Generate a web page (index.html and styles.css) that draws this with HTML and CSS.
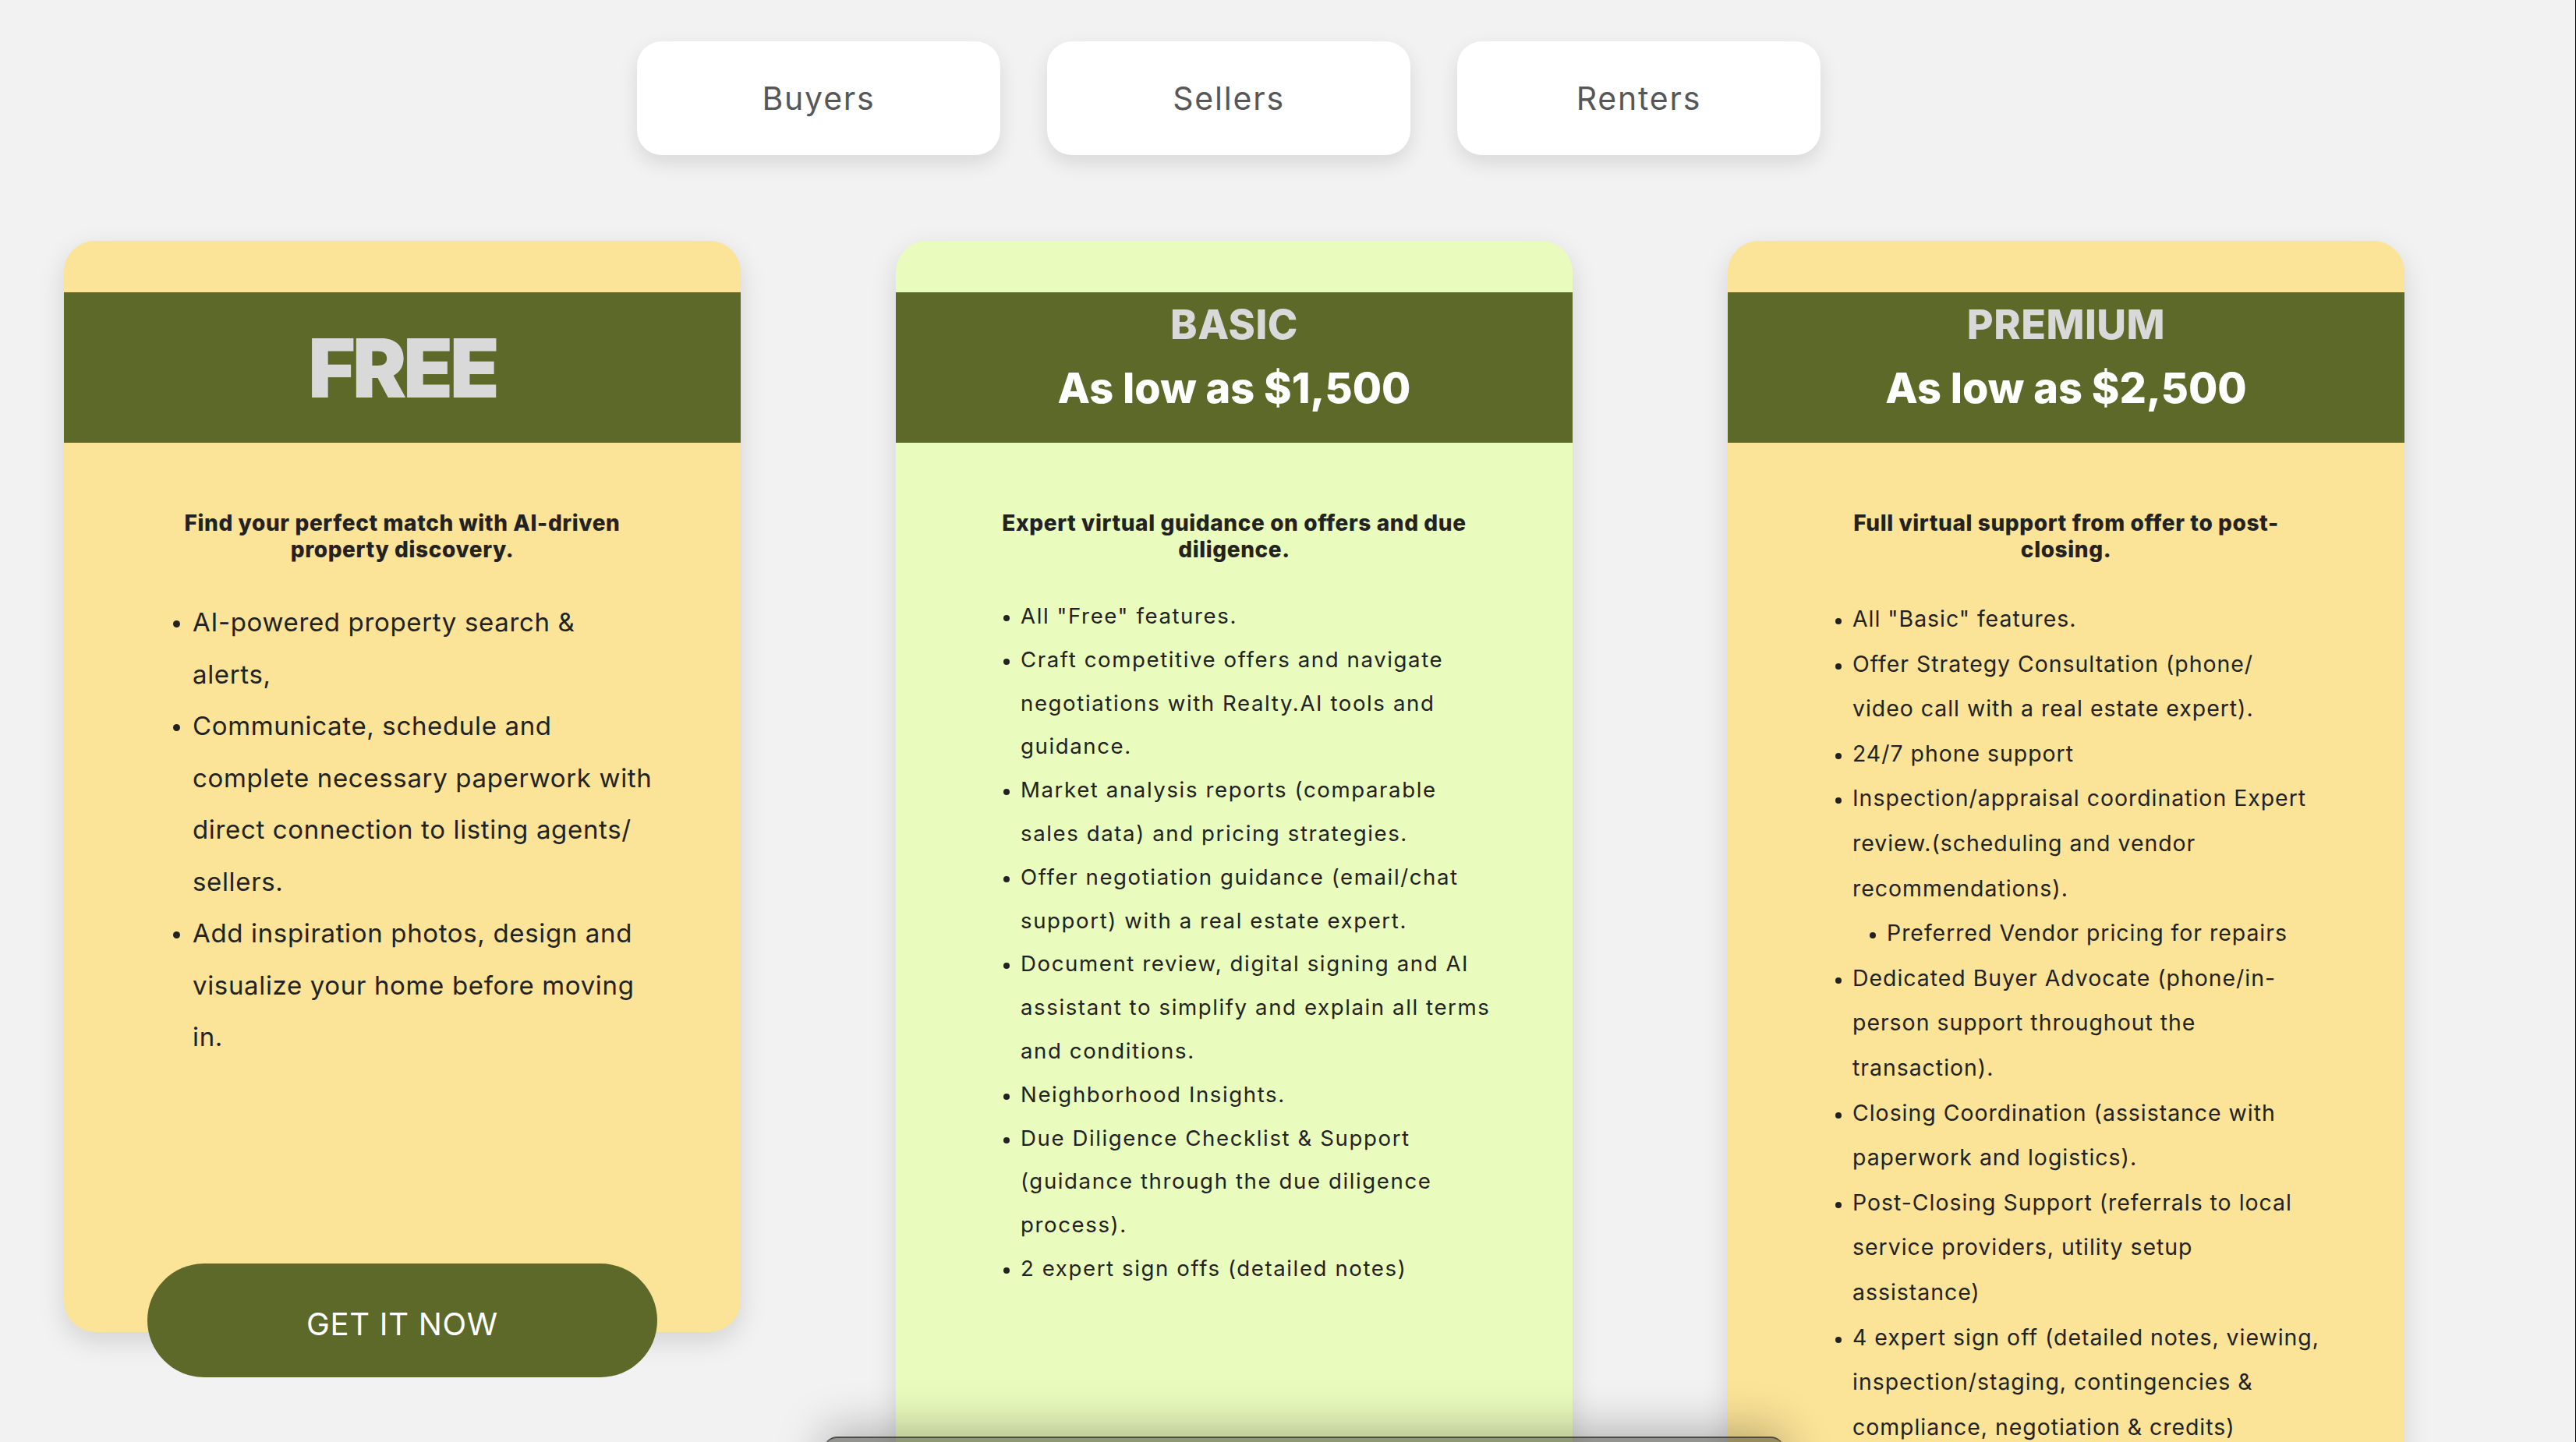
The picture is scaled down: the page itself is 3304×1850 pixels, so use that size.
FILE: index.html
```html
<!DOCTYPE html>
<html lang="en">
<head>
<meta charset="utf-8">
<title>Realty.AI Plans</title>
<link rel="stylesheet" href="styles.css">
</head>
<body>
<main class="wrap">
  <nav class="tabs">
    <button class="tab">Buyers</button>
    <button class="tab">Sellers</button>
    <button class="tab">Renters</button>
  </nav>

  <div class="cards">
    <section class="card card--yellow card--free">
      <header class="band band--single">
        <h2 class="plan-big">FREE</h2>
      </header>
      <p class="lead">Find your perfect match with AI-driven<br>property discovery.</p>
      <ul class="features features--lg">
        <li>AI-powered property search &amp;<br>alerts,</li>
        <li>Communicate, schedule and<br>complete necessary paperwork with<br>direct connection to listing agents/<br>sellers.</li>
        <li>Add inspiration photos, design and<br>visualize your home before moving<br>in.</li>
      </ul>
      <a class="cta" href="#">GET IT NOW</a>
    </section>

    <section class="card card--green card--basic">
      <header class="band">
        <h2 class="plan">BASIC</h2>
        <p class="price">As low as $1,500</p>
      </header>
      <p class="lead">Expert virtual guidance on offers and due<br>diligence.</p>
      <ul class="features features--sm">
        <li>All "Free" features.</li>
        <li>Craft competitive offers and navigate<br>negotiations with Realty.AI tools and<br>guidance.</li>
        <li>Market analysis reports (comparable<br>sales data) and pricing strategies.</li>
        <li>Offer negotiation guidance (email/chat<br>support) with a real estate expert.</li>
        <li>Document review, digital signing and AI<br>assistant to simplify and explain all terms<br>and conditions.</li>
        <li>Neighborhood Insights.</li>
        <li>Due Diligence Checklist &amp; Support<br>(guidance through the due diligence<br>process).</li>
        <li>2 expert sign offs (detailed notes)</li>
      </ul>
    </section>

    <section class="card card--yellow card--premium">
      <header class="band">
        <h2 class="plan">PREMIUM</h2>
        <p class="price">As low as $2,500</p>
      </header>
      <p class="lead">Full virtual support from offer to post-<br>closing.</p>
      <ul class="features features--md">
        <li>All "Basic" features.</li>
        <li>Offer Strategy Consultation (phone/<br>video call with a real estate expert).</li>
        <li>24/7 phone support</li>
        <li>Inspection/appraisal coordination Expert<br>review.(scheduling and vendor<br>recommendations).
          <ul class="sub">
            <li>Preferred Vendor pricing for repairs</li>
          </ul>
        </li>
        <li>Dedicated Buyer Advocate (phone/in-<br>person support throughout the<br>transaction).</li>
        <li>Closing Coordination (assistance with<br>paperwork and logistics).</li>
        <li>Post-Closing Support (referrals to local<br>service providers, utility setup<br>assistance)</li>
        <li>4 expert sign off (detailed notes, viewing,<br>inspection/staging, contingencies &amp;<br>compliance, negotiation &amp; credits)</li>
      </ul>
    </section>
  </div>
</main>
<div class="dock" aria-hidden="true"></div>
</body>
</html>
```

FILE: styles.css
```css
html, body {
  margin: 0;
  padding: 0;
  overflow: hidden;
}

body {
  background: #f2f2f2;
  font-family: "Inter", "Liberation Sans", sans-serif;
  color: #222222;
  height: 1850px;
}

body::after {
  content: "";
  position: fixed;
  top: 0;
  right: 0;
  bottom: 0;
  width: 1px;
  background: #000;
}

.wrap {
  width: 3002px;
  margin-left: 82px;
  padding-top: 53px;
}

/* ---------- tabs ---------- */
.tabs {
  display: flex;
  justify-content: center;
  gap: 60px;
  padding-right: 14px;
}

.tab {
  width: 466px;
  height: 146px;
  border: none;
  border-radius: 32px;
  background: #ffffff;
  box-shadow: 0 10px 26px rgba(0, 0, 0, 0.11);
  font-family: "Inter", "Liberation Sans", sans-serif;
  font-size: 41px;
  font-weight: 400;
  letter-spacing: 1.8px;
  color: #575757;
  padding: 0;
}

/* ---------- cards ---------- */
.cards {
  display: flex;
  align-items: flex-start;
  gap: 199px;
  margin-top: 110px;
}

.card {
  width: 868px;
  flex: 0 0 868px;
  border-radius: 40px;
  padding-top: 66px;
  box-sizing: border-box;
  display: flex;
  flex-direction: column;
  box-shadow: 0 12px 34px rgba(0, 0, 0, 0.13);
}

.card--yellow { background: #fbe397; }
.card--green { background: #e9fbbd; }

.card--free { height: 1400px; }
.card--basic { min-height: 1900px; }
.card--premium { min-height: 1900px; }

.band {
  height: 193px;
  box-sizing: border-box;
  background: #5d6929;
  display: flex;
  flex-direction: column;
  align-items: center;
  padding-top: 16px;
}

.band--single {
  justify-content: center;
  padding-top: 0;
}

.plan-big {
  margin: 0;
  font-size: 104px;
  line-height: 104px;
  font-weight: 900;
  letter-spacing: -4px;
  color: #d9d9d9;
}

.plan {
  margin: 0;
  font-size: 52px;
  line-height: 52px;
  font-weight: 800;
  letter-spacing: 0.5px;
  color: #d9d9d9;
}

.price {
  margin: 28px 0 0;
  font-size: 54px;
  line-height: 54px;
  font-weight: 800;
  color: #ffffff;
}

.lead {
  margin: 86px 0 0;
  text-align: center;
  font-size: 28px;
  line-height: 34px;
  font-weight: 800;
  letter-spacing: 0.6px;
  color: #222222;
}

.features {
  margin: 43px 0 0;
  padding: 0 30px 0 160px;
  color: #222222;
  list-style: disc;
}

.features--lg {
  padding-left: 165px;
  font-size: 33px;
  line-height: 66.5px;
  letter-spacing: 0.65px;
}

.features--sm {
  margin-top: 41px;
  font-size: 27.6px;
  line-height: 55.8px;
  letter-spacing: 1.6px;
}

.features--md {
  font-size: 28.4px;
  line-height: 57.6px;
  letter-spacing: 1px;
}

.features li::marker {
  font-size: 0.85em;
}

.sub {
  margin: 0;
  padding-left: 44px;
  list-style: disc;
}

.cta {
  margin-top: auto;
  margin-bottom: -58px;
  align-self: center;
  width: 654px;
  height: 146px;
  border-radius: 73px;
  background: #5d6929;
  color: #ffffff;
  text-decoration: none;
  font-size: 40px;
  letter-spacing: 0.7px;
  display: flex;
  align-items: center;
  justify-content: center;
  padding-top: 8px;
  box-sizing: border-box;
}

/* ---------- bottom dock overlay ---------- */
.dock {
  position: fixed;
  left: 1056px;
  top: 1843px;
  width: 1233px;
  height: 80px;
  border-radius: 18px 18px 0 0;
  background: rgba(40, 42, 30, 0.47);
  border-top: 2px solid rgba(60, 60, 60, 0.8);
  box-shadow: 0 -8px 60px rgba(0, 0, 0, 0.28);
}
```
